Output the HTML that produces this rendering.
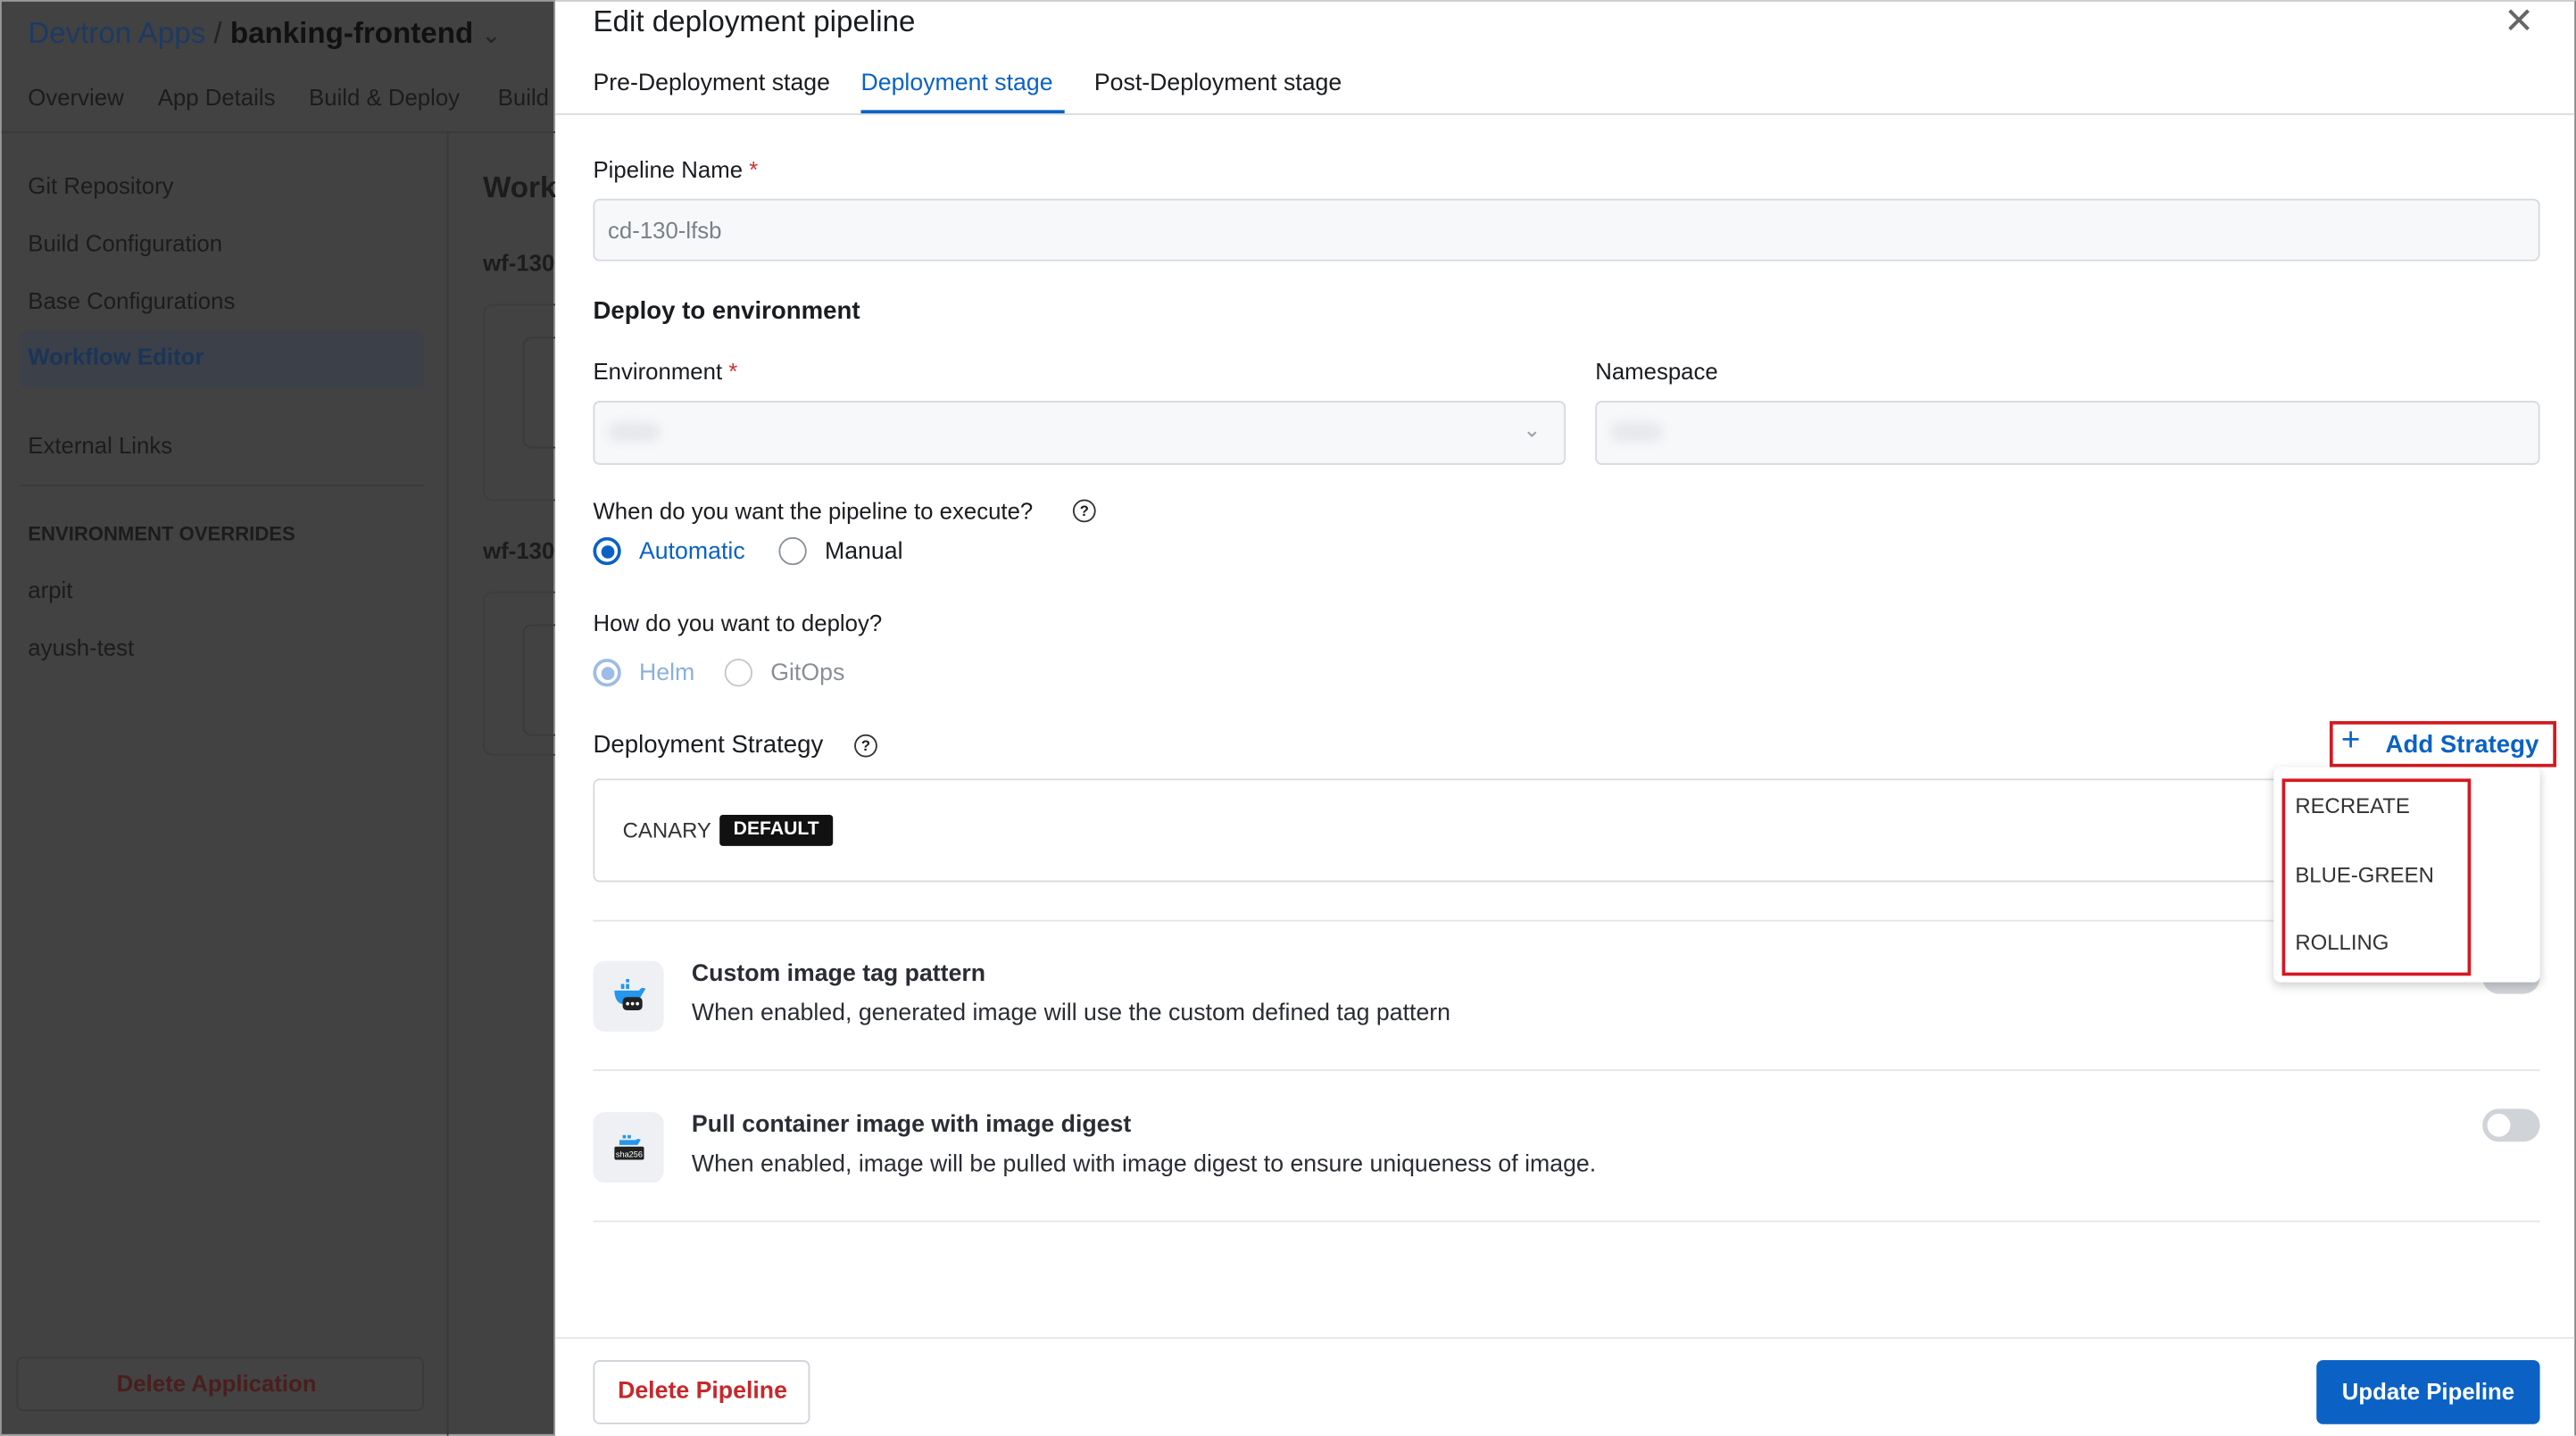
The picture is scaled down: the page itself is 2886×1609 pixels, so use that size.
<!DOCTYPE html>
<html><head><meta charset="utf-8"><style>
*{box-sizing:border-box;margin:0;padding:0}
html,body{width:2886px;height:1608px;overflow:hidden;background:#fff}
#s{position:absolute;left:0;top:0;width:1568px;height:874px;transform:scale(1.8406);transform-origin:0 0;font-family:"Liberation Sans",sans-serif;color:#1a1c20}
.a{position:absolute;white-space:nowrap}
.dk{color:#1c1c1c}
.inp{position:absolute;background:#f7f8fa;border:1px solid #d6d9de;border-radius:4px}
.lbl{font-size:14px;color:#1a1c20}
.hr{position:absolute;height:1px;background:#e3e5e8}
.radio{position:absolute;width:17px;height:17px;border-radius:50%;border:1.5px solid #8a9099;background:#fff}
</style></head><body><div id="s">
<!-- left dimmed app -->
<div class="a" style="left:0;top:0;width:338px;height:874px;background:#424242;border:1px solid #9a9a9a"></div>
<div class="a" style="left:1px;top:80px;width:337px;height:1px;background:#3a3a3a"></div>
<div class="a" style="left:272px;top:80px;width:1px;height:794px;background:#383838"></div>
<div class="a" style="left:17px;top:10px;font-size:18px;color:#1d3a63">Devtron Apps <span style="color:#222">/ </span><b style="color:#111">banking-frontend</b> <span style="color:#222;font-size:14px">⌄</span></div>
<div class="a dk" style="left:17px;top:51px;font-size:14px;word-spacing:0">Overview</div>
<div class="a dk" style="left:96px;top:51px;font-size:14px">App Details</div>
<div class="a dk" style="left:188px;top:51px;font-size:14px">Build &amp; Deploy</div>
<div class="a dk" style="left:303px;top:51px;font-size:14px">Build</div>
<div class="a dk" style="left:17px;top:105px;font-size:14px">Git Repository</div>
<div class="a dk" style="left:17px;top:140px;font-size:14px">Build Configuration</div>
<div class="a dk" style="left:17px;top:175px;font-size:14px">Base Configurations</div>
<div class="a" style="left:12px;top:201px;width:246px;height:35px;background:#3c4048;border-radius:4px"></div>
<div class="a" style="left:17px;top:209px;font-size:14px;color:#1b3558;font-weight:bold">Workflow Editor</div>
<div class="a" style="left:12px;top:295px;width:246px;height:1px;background:#3a3a3a"></div>
<div class="a dk" style="left:17px;top:263px;font-size:14px">External Links</div>
<div class="a dk" style="left:17px;top:318px;font-size:12px;font-weight:bold">ENVIRONMENT OVERRIDES</div>
<div class="a dk" style="left:17px;top:351px;font-size:14px">arpit</div>
<div class="a dk" style="left:17px;top:386px;font-size:14px">ayush-test</div>
<div class="a" style="left:10px;top:826px;width:248px;height:33px;border:1px solid #3a3a3a;border-radius:4px;background:#434343"></div>
<div class="a" style="left:71px;top:834px;font-size:14px;font-weight:bold;color:#4a1e1e">Delete Application</div>
<div class="a dk" style="left:294px;top:104px;font-size:18px;font-weight:bold">Work</div>
<div class="a dk" style="left:294px;top:152px;font-size:14px;font-weight:bold">wf-130</div>
<div class="a dk" style="left:294px;top:327px;font-size:14px;font-weight:bold">wf-130</div>
<div class="a" style="left:294px;top:185px;width:44px;height:120px;border:1px solid #3c3c3c;border-right:0;border-radius:6px 0 0 6px"></div>
<div class="a" style="left:318px;top:205px;width:20px;height:68px;border:1px solid #3a3a3a;border-right:0;border-radius:6px 0 0 6px"></div>
<div class="a" style="left:294px;top:360px;width:44px;height:100px;border:1px solid #3c3c3c;border-right:0;border-radius:6px 0 0 6px"></div>
<div class="a" style="left:318px;top:380px;width:20px;height:68px;border:1px solid #3a3a3a;border-right:0;border-radius:6px 0 0 6px"></div>
<!-- right panel -->
<div class="a" style="left:338px;top:0;width:1230px;height:874px;background:#fff;border-right:1px solid #888;border-top:1px solid #ccc"></div>
<div class="a" style="left:361px;top:3px;font-size:18px;color:#1a1c20">Edit deployment pipeline</div>
<div class="a" style="left:1524px;top:0px;font-size:22px;color:#666;font-weight:300">✕</div>
<div class="a" style="left:361px;top:43px;font-size:14.5px">Pre-Deployment stage</div>
<div class="a" style="left:524px;top:43px;font-size:14.5px;color:#0b62c4">Deployment stage</div>
<div class="a" style="left:524px;top:67px;width:124px;height:2px;background:#0b62c4"></div>
<div class="a" style="left:666px;top:43px;font-size:14.5px">Post-Deployment stage</div>
<div class="hr" style="left:338px;top:69px;width:1229px;background:#d8dbe0"></div>
<div class="a lbl" style="left:361px;top:95px">Pipeline Name <span style="color:#d0302f">*</span></div>
<div class="inp" style="left:361px;top:121px;width:1185px;height:38px"></div>
<div class="a" style="left:370px;top:132px;font-size:14px;color:#7b8087">cd-130-lfsb</div>
<div class="a" style="left:361px;top:181px;font-size:15px;font-weight:bold">Deploy to environment</div>
<div class="a lbl" style="left:361px;top:218px">Environment <span style="color:#d0302f">*</span></div>
<div class="inp" style="left:361px;top:244px;width:592px;height:39px"></div>
<div class="a" style="left:370px;top:257px;width:32px;height:12px;background:#e6e8eb;border-radius:6px;filter:blur(3px)"></div>
<div class="a" style="left:927px;top:254px;font-size:13px;color:#9aa0a7">⌄</div>
<div class="a lbl" style="left:971px;top:218px">Namespace</div>
<div class="inp" style="left:971px;top:244px;width:575px;height:39px"></div>
<div class="a" style="left:980px;top:257px;width:32px;height:12px;background:#e6e8eb;border-radius:6px;filter:blur(3px)"></div>
<div class="a lbl" style="left:361px;top:303px">When do you want the pipeline to execute?</div>
<div class="a" style="left:653px;top:304px;width:14px;height:14px;border:1.3px solid #333;border-radius:50%;font-size:9px;text-align:center;line-height:12px;font-weight:bold">?</div>
<div class="radio" style="left:361px;top:327px;border:2px solid #0b62c4"><div style="margin:2.5px;width:8px;height:8px;border-radius:50%;background:#0b62c4"></div></div>
<div class="a" style="left:389px;top:328px;font-size:14.5px;color:#0b62c4">Automatic</div>
<div class="radio" style="left:474px;top:327px"></div>
<div class="a lbl" style="left:502px;top:328px;font-size:14.5px">Manual</div>
<div class="a lbl" style="left:361px;top:371px">How do you want to deploy?</div>
<div class="radio" style="left:361px;top:401px;border:2px solid #9dbbe8"><div style="margin:2.5px;width:8px;height:8px;border-radius:50%;background:#9dbbe8"></div></div>
<div class="a" style="left:389px;top:402px;font-size:14.5px;color:#8ab0e0">Helm</div>
<div class="radio" style="left:441px;top:401px;border-color:#c3c7cc"></div>
<div class="a" style="left:469px;top:402px;font-size:14.5px;color:#8a8f96">GitOps</div>
<div class="a" style="left:361px;top:445px;font-size:15px">Deployment Strategy</div>
<div class="a" style="left:520px;top:447px;width:14px;height:14px;border:1.3px solid #333;border-radius:50%;font-size:9px;text-align:center;line-height:12px;font-weight:bold">?</div>
<div class="a" style="left:1418px;top:439px;width:138px;height:28px;border:2px solid #d41920"></div>
<div class="a" style="left:1425px;top:440px;font-size:20px;color:#0b62c4">+</div>
<div class="a" style="left:1452px;top:445px;font-size:15px;font-weight:bold;color:#0b62c4">Add Strategy</div>
<div class="a" style="left:361px;top:474px;width:1185px;height:63px;border:1px solid #d6d9de;border-radius:4px"></div>
<div class="a" style="left:379px;top:498px;font-size:13px;color:#333">CANARY</div>
<div class="a" style="left:438px;top:496px;width:69px;height:19px;background:#111;border-radius:2px;color:#fff;font-size:11.5px;font-weight:bold;text-align:center;line-height:19px">DEFAULT</div>
<div class="hr" style="left:361px;top:560px;width:1185px"></div>
<div class="a" style="left:361px;top:585px;width:43px;height:43px;background:#eef0f3;border-radius:7px"></div>
<svg class="a" style="left:372px;top:595px" width="22" height="22" viewBox="0 0 22 22"><path d="M2 8h15c1-2 3-2 4-1-1 1-1 2-2 3-2 5-8 7-13 6C3 15 2 11 2 8z" fill="#2496ed"/><rect x="6" y="4" width="2" height="3" fill="#2496ed"/><rect x="9" y="4" width="2" height="3" fill="#2496ed"/><rect x="9" y="1" width="2" height="2" fill="#2496ed"/><rect x="7" y="12" width="12" height="8" rx="2.5" fill="#222"/><circle cx="10" cy="16" r="1" fill="#fff"/><circle cx="13" cy="16" r="1" fill="#fff"/><circle cx="16" cy="16" r="1" fill="#fff"/></svg>
<div class="a" style="left:421px;top:585px;font-size:14.5px;font-weight:bold;color:#2a2d33">Custom image tag pattern</div>
<div class="a" style="left:421px;top:609px;font-size:14.5px;color:#2a2d33">When enabled, generated image will use the custom defined tag pattern</div>
<div class="a" style="left:1511px;top:585px;width:35px;height:20px;background:#d0d4d9;border-radius:10px"></div>
<div class="hr" style="left:361px;top:651px;width:1185px"></div>
<div class="a" style="left:361px;top:677px;width:43px;height:43px;background:#eef0f3;border-radius:7px"></div>
<svg class="a" style="left:372px;top:687px" width="22" height="22" viewBox="0 0 22 22"><path d="M5 7h10c1-1 2-1 3 0-1 1-1 2-2 3H5z" fill="#2496ed"/><rect x="7" y="4" width="2" height="2" fill="#2496ed"/><rect x="10" y="4" width="2" height="2" fill="#2496ed"/><rect x="2" y="11" width="18" height="8" rx="1" fill="#222"/><text x="11" y="17.5" font-size="5" fill="#fff" text-anchor="middle" font-family="Liberation Sans">sha256</text></svg>
<div class="a" style="left:421px;top:677px;font-size:14.5px;font-weight:bold;color:#2a2d33">Pull container image with image digest</div>
<div class="a" style="left:421px;top:701px;font-size:14.5px;color:#2a2d33">When enabled, image will be pulled with image digest to ensure uniqueness of image.</div>
<div class="a" style="left:1511px;top:675px;width:35px;height:20px;background:#d0d4d9;border-radius:10px"><div style="margin:3px;width:14px;height:14px;border-radius:50%;background:#fff"></div></div>
<div class="hr" style="left:361px;top:743px;width:1185px"></div>
<!-- dropdown -->
<div class="a" style="left:1384px;top:467px;width:162px;height:131px;background:#fff;border-radius:4px;box-shadow:0 2px 6px rgba(0,0,0,.2)"></div>
<div class="a" style="left:1389px;top:474px;width:115px;height:120px;border:2px solid #d41920"></div>
<div class="a" style="left:1397px;top:483px;font-size:13px;color:#333">RECREATE</div>
<div class="a" style="left:1397px;top:525px;font-size:13px;color:#333">BLUE-GREEN</div>
<div class="a" style="left:1397px;top:566px;font-size:13px;color:#333">ROLLING</div>
<!-- footer -->
<div class="hr" style="left:338px;top:814px;width:1229px"></div>
<div class="a" style="left:361px;top:828px;width:132px;height:39px;border:1px solid #cfd3d8;border-radius:4px"></div>
<div class="a" style="left:376px;top:839px;font-size:14.5px;font-weight:bold;color:#c6282b">Delete Pipeline</div>
<div class="a" style="left:1410px;top:828px;width:136px;height:39px;background:#0b62c4;border-radius:4px;color:#fff;font-size:14px;font-weight:bold;text-align:center;line-height:39px">Update Pipeline</div>
</div></body></html>
